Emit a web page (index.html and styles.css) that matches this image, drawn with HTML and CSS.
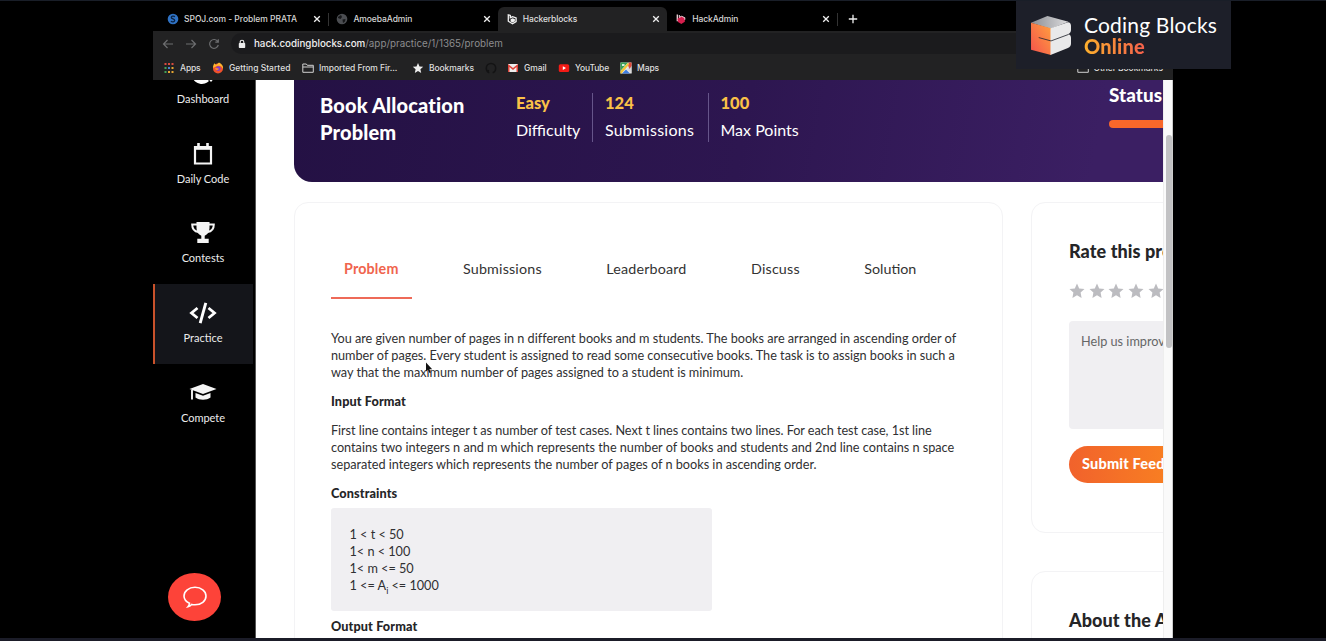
FILE: index.html
```html
<!DOCTYPE html>
<html lang="en">
<head>
<meta charset="utf-8">
<title>Hackerblocks</title>
<link rel="stylesheet" href="styles.css">
</head>
<body>
<div class="screen">
  <div class="browser">
    <div class="tabstrip">
      <div class="tab">
        <svg class="fav" viewBox="0 0 12 12"><circle cx="6" cy="6" r="5.3" fill="#2f72c4"/><path d="M8 3.600C6.500 2.700 4.200 3 4.300 4.600 4.400 6.200 7.800 5.700 7.700 7.400 7.600 9 5.200 9.200 3.900 8.200" fill="none" stroke="#0b2342" stroke-width="1.300"/></svg>
        <span class="t-spoj">SPOJ.com - Problem PRATA</span>
        <svg class="close" viewBox="0 0 8 8"><path d="M1.200 1.200l5.600 5.600M6.800 1.200L1.200 6.800"/></svg>
      </div>
      <div class="tab sep">
        <svg class="fav" viewBox="0 0 12 12"><circle cx="6" cy="6" r="5.300" fill="#4b4d51"/><path d="M2 4l3-2 1 2-1.500 2L2 5zM6.500 6.500L9.500 6 9 8.500 7 10z" fill="#17181a"/></svg>
        <span class="t-amoeba">AmoebaAdmin</span>
        <svg class="close" viewBox="0 0 8 8"><path d="M1.200 1.200l5.600 5.600M6.800 1.200L1.200 6.800"/></svg>
      </div>
      <div class="tab active">
        <svg class="fav" viewBox="0 0 12 12"><path d="M2.300 1.800v6.400l4.200 2.500 3.600-2.100V5L6.600 3.600 4.300 4.700V2.500z" fill="none" stroke="#f2f2f2" stroke-width="1.300"/><path d="M4.600 6.300l2-1 2.300 1v2L6.600 9.600l-2-1.200z" fill="#f2f2f2"/></svg>
        <span class="t-hb">Hackerblocks</span>
        <svg class="close" viewBox="0 0 8 8"><path d="M1.200 1.200l5.600 5.600M6.800 1.200L1.200 6.800"/></svg>
      </div>
      <div class="tab">
        <svg class="fav" viewBox="0 0 12 12"><path d="M2.300 1.500v6.700" stroke="#f3d5dc" stroke-width="1.300"/><path d="M2.500 6l1.800-2L6.500 3.300 9.800 4.700v4L6.300 10.900 3 9z" fill="#d51f4d"/><path d="M4.300 2v2.400l2.200-1.100 3.300 1.400v2" fill="none" stroke="#f3d5dc"/></svg>
        <span class="t-ha">HackAdmin</span>
        <svg class="close" viewBox="0 0 8 8"><path d="M1.200 1.200l5.600 5.600M6.800 1.200L1.200 6.800"/></svg>
      </div>
      <div class="newtab sep"><svg class="plus" viewBox="0 0 10 10"><path d="M5 .8v8.400M.8 5h8.400"/></svg></div>
    </div>
    <div class="toolbar">
      <svg class="nav" viewBox="0 0 12 12"><path d="M11 6H1.500M5.500 2l-4 4 4 4"/></svg>
      <svg class="nav" viewBox="0 0 12 12"><path d="M1 6h9.500M6.500 2l4 4-4 4"/></svg>
      <svg class="nav" viewBox="0 0 12 12"><path d="M9.800 3.600A4.400 4.400 0 1 0 10.300 7M10.300 1.200v3H7.300"/></svg>
      <div class="omnibox">
        <svg class="lock" viewBox="0 0 8 10"><path d="M2.200 4.500V3a1.800 1.800 0 0 1 3.600 0v1.500" fill="none" stroke="#ededed" stroke-width="1.100"/><rect x=".8" y="4" width="6.400" height="5" rx=".7" fill="#ededed"/></svg>
        <span class="url"><span class="host">hack.codingblocks.com</span><span class="path">/app/practice/1/1365/problem</span></span>
      </div>
    </div>
    <div class="bookmarks">
      <div class="bm b1"><svg class="bmi" viewBox="0 0 12 12"><g fill="#d94b3f"><path d="M1.500 1h2v2h-2zM5 1h2v2H5zM8.500 1h2v2h-2z"/></g><path d="M1.500 5h2v2h-2zM1.500 9h2v2h-2z" fill="#43a25a"/><path d="M5 5h2v2H5z" fill="#4a7fd0"/><path d="M8.500 5h2v2h-2zM5 9h2v2H5zM8.500 9h2v2h-2z" fill="#e6a531"/></svg><span class="k-apps">Apps</span></div>
      <div class="bm b2"><svg class="bmi" viewBox="0 0 12 12"><circle cx="6" cy="6.500" r="5" fill="#f0512c"/><path d="M1 6C1 3 2 2 2.500 1.200L4 3 7 .5C10 2 11.500 4 11 7 10 4 7 3 5 4z" fill="#ffb52e"/><circle cx="6.300" cy="6.600" r="2.300" fill="#7b3fd0"/><path d="M3 6.500c1.500-1 2.500 0 4 .3C6 8.500 4 8.500 3 6.500z" fill="#ff8b2c"/></svg><span>Getting Started</span></div>
      <div class="bm b3"><svg class="bmi" viewBox="0 0 12 12"><path d="M.8 10.300V2h3.500l1 1.300h6v7zM.8 5h10.500" fill="none" stroke="#d0d0d0"/></svg><span class="k-imp">Imported From Fir...</span></div>
      <div class="bm b4"><svg class="bmi" viewBox="0 0 12 12"><path d="M6 1l1.500 3.400 3.700.4-2.800 2.500.8 3.700L6 9.100 2.800 11l.8-3.700L.8 4.800l3.700-.4z" fill="#eee"/></svg><span class="k-bm">Bookmarks</span></div>
      <div class="bm b5"><svg class="bmi" viewBox="0 0 12 12"><path d="M4.300 10.700C2.300 10 1.300 8.300 1.300 6.200a4.700 4.700 0 0 1 9.400 0c0 2.100-1 3.800-3 4.500M4 9.200c-.6-.3-1-.7-1.200-1.200" fill="none" stroke="#131314" stroke-width="1.500"/></svg></div>
      <div class="bm b6"><svg class="bmi" viewBox="0 0 12 12"><path d="M1 2h10v8H1z" fill="#eee"/><path d="M1 10V2l5 4 5-4v8H9.500V5L6 8 2.500 5v5z" fill="#dd4238"/></svg><span class="k-gm">Gmail</span></div>
      <div class="bm b7"><svg class="bmi" viewBox="0 0 12 12"><rect x=".8" y="2.200" width="10.400" height="7.800" rx="1.600" fill="#f31b16"/><path d="M4.800 4.300v3.600L8 6.100z" fill="#fff"/></svg><span class="k-yt">YouTube</span></div>
      <div class="bm b8"><svg class="bmi" viewBox="0 0 12 12"><path d="M.5.500h11v11H.5z" fill="#e9e9e9"/><path d="M.5.500H8L.5 9z" fill="#3aa158"/><path d="M2 11.500l4-4 4 4z" fill="#3e7de0"/><path d="M7 7l4.500 4.500V4z" fill="#d8d8d8"/><path d="M9 .5h2.500V4L9.500 7 7.800 3z" fill="#e14a3c"/><path d="M.5 9L8 .8l1 2-7.500 8.700h-1z" fill="#f3c637"/><path d="M2 2h2.500v2H2z" fill="#d9efe0"/></svg><span class="k-mp">Maps</span></div>
      <div class="bm other"><svg class="bmi" viewBox="0 0 12 12"><path d="M.8 10.300V2h3.500l1 1.300h6v7z" fill="none" stroke="#d0d0d0"/></svg><span class="k-ot">Other Bookmarks</span></div>
    </div>
    <div class="page">
      <nav class="sidebar">
        <div class="item"><svg class="ico" viewBox="0 0 28 28"><path d="M13 4a10 10 0 1 0 7 17L13 14z" fill="#fff"/><path d="M16 15h9c0 3-1 5-3 7z" fill="#fff"/></svg><span>Dashboard</span></div>
        <div class="item"><svg class="ico" viewBox="0 0 28 28"><path d="M6 7h16v16.500H6z" fill="none" stroke="#f4f4f4" stroke-width="2.200"/><path d="M5 6h18v3.800H5z" fill="#f4f4f4"/><path d="M9.500 3v5M18.500 3v5" stroke="#f4f4f4" stroke-width="2.600"/></svg><span>Daily Code</span></div>
        <div class="item"><svg class="ico" viewBox="0 0 28 28"><path d="M7.500 3h13v6c0 4-2 6.500-4.800 7.800v2.900h4v4.300H8.300v-4.300h4v-2.900C9.500 15.500 7.500 13 7.500 9z" fill="#f4f4f4"/><path d="M8 5.500H3.200c0 4.500 2 7 6.300 7.500M20 5.500h4.800c0 4.500-2 7-6.300 7.500" fill="none" stroke="#f4f4f4" stroke-width="2"/></svg><span>Contests</span></div>
        <div class="item current"><svg class="ico" viewBox="0 0 28 28"><path d="M8.500 9l-6 5 6 5M19.500 9l6 5-6 5" fill="none" stroke="#fff" stroke-width="2.800"/><path d="M16.800 3.800l-5.600 20.400" stroke="#fff" stroke-width="2.900"/></svg><span>Practice</span></div>
        <div class="item"><svg class="ico" viewBox="0 0 28 28"><path d="M14 5l13.500 5L14 15 .5 10z" fill="#f4f4f4"/><path d="M6.500 14l7.500 2.800 7.500-2.800v4.500c-4 3-11 3-15 0z" fill="#f4f4f4"/><path d="M3 11v9.500" stroke="#f4f4f4" stroke-width="1.900"/></svg><span>Compete</span></div>
        <div class="chat"><svg viewBox="0 0 26 24"><path d="M7.500 18.300C3.800 16.500 2 14 2 11 2 6 6.800 2.300 13 2.300S24 6 24 11s-4.800 8.800-11 8.800c-1.200 0-2.300-.1-3.300-.4-.8 1.200-2 2-3.700 2.300.9-1 1.400-2.100 1.500-3.400z"/></svg></div>
      </nav>
      <main class="content">
        <section class="hero">
          <h1>Book Allocation<br>Problem</h1>
          <div class="stats">
            <div class="stat"><b>Easy</b><span>Difficulty</span></div>
            <div class="stat"><b>124</b><span class="subs">Submissions</span></div>
            <div class="stat"><b>100</b><span>Max Points</span></div>
          </div>
          <div class="status"><b>Status</b><i class="bar"></i></div>
        </section>
        <div class="cols">
          <section class="card problem">
            <div class="ptabs">
              <div class="ptab on">Problem</div>
              <div class="ptab">Submissions</div>
              <div class="ptab">Leaderboard</div>
              <div class="ptab">Discuss</div>
              <div class="ptab last">Solution</div>
            </div>
            <p>You are given number of pages in n different books and m students. The books are arranged in ascending order of<br>number of pages. Every student is assigned to read some consecutive books. The task is to assign books in such a<br>way that the maximum number of pages assigned to a student is minimum.</p>
            <h2>Input Format</h2>
            <p><span class="tight">First line contains integer t as number of test cases. Next t lines contains two lines. For each test case, 1st line</span><br>contains two integers n and m which represents the number of books and students and 2nd line contains n space<br>separated integers which represents the number of pages of n books in ascending order.</p>
            <h2>Constraints</h2>
            <div class="code">1 &lt; t &lt; 50<br>1&lt; n &lt; 100<br>1&lt; m &lt;= 50<br>1 &lt;= A<sub>i</sub> &lt;= 1000</div>
            <h2>Output Format</h2>
          </section>
          <aside class="side">
            <section class="card rate">
              <h3>Rate this problem</h3>
              <div class="stars">
                <svg viewBox="0 0 16 16"><path d="M8 .5l2.200 4.900 5.300.6-3.900 3.600 1 5.400L8 12.300 3.400 15l1-5.400L.5 6l5.300-.6z"/></svg>
                <svg viewBox="0 0 16 16"><path d="M8 .5l2.200 4.900 5.300.6-3.900 3.600 1 5.400L8 12.300 3.400 15l1-5.400L.5 6l5.300-.6z"/></svg>
                <svg viewBox="0 0 16 16"><path d="M8 .5l2.200 4.900 5.300.6-3.900 3.600 1 5.400L8 12.300 3.400 15l1-5.400L.5 6l5.300-.6z"/></svg>
                <svg viewBox="0 0 16 16"><path d="M8 .5l2.200 4.900 5.300.6-3.900 3.600 1 5.400L8 12.300 3.400 15l1-5.400L.5 6l5.300-.6z"/></svg>
                <svg viewBox="0 0 16 16"><path d="M8 .5l2.200 4.900 5.300.6-3.900 3.600 1 5.400L8 12.300 3.400 15l1-5.400L.5 6l5.300-.6z"/></svg>
              </div>
              <div class="feedback">Help us improve</div>
              <div class="submit">Submit Feedback</div>
            </section>
            <section class="card about"><h3>About the Author</h3></section>
          </aside>
        </div>
      </main>
      <div class="scroll"><i class="thumb"></i></div>
    </div>
  </div>
  <div class="brand">
    <svg class="cube" viewBox="0 0 40 40"><defs><linearGradient id="o" x1="1" y1="0" x2="0" y2="1"><stop offset="0" stop-color="#ffa23f"/><stop offset="1" stop-color="#f4514c"/></linearGradient><linearGradient id="g" x1="0" y1="0" x2="1" y2="0"><stop offset="0" stop-color="#8b8d93"/><stop offset="1" stop-color="#dcdcde"/></linearGradient></defs><path d="M1 7.500L17 1l20.500 5.500L20 13.500z" fill="url(#g)"/><path d="M1 7.500L20.500 13v26L1 34z" fill="url(#o)"/><path d="M20 13l17-6c2 0 3 1.500 3 3.500v4c0 2-1 3.500-3 4.300 2 0 3 1.500 3 3.500v5.500c0 2-1 3.500-3 4.300L20 39z" fill="#e9e9ea"/><path d="M8.500 22l12 3.300L37.500 19" fill="none" stroke="#20222b" stroke-width=".8"/></svg>
    <div class="words">Coding Blocks<br><b>Online</b></div>
  </div>
  <svg class="cursor" viewBox="0 0 8 12"><path d="M1 .5v9l2-1.800L4.500 11l1.300-.6-1.400-3.100h2.800z"/></svg>
</div>
</body>
</html>
```
FILE: styles.css
```css
*{box-sizing:border-box}
body{margin:0;background:#000;overflow:hidden;font-family:Lato,"Open Sans",sans-serif}
.screen{position:relative;width:1326px;height:641px;overflow:hidden;background:#000;border-top:1px solid #191e28;border-bottom:3px solid #1b1c28}
.browser{width:1020px;height:637px;margin-left:153px;display:flex;flex-direction:column}
svg{display:block;flex:none}
.tabstrip,.toolbar,.bookmarks{font-family:Inter,sans-serif;white-space:nowrap;flex:none}
.tabstrip{height:30px;padding:6px 0 0 6px;display:flex;background:#000;font-size:8.500px}
.tab{width:169.400px;height:24px;padding:0 7px 1px 8px;display:flex;align-items:center;color:#d6d6d6;font-weight:500}
.tab.active{background:#222223;border-radius:6px 6px 0 0;color:#dedede}
.t-spoj{letter-spacing:-.03px}
.t-amoeba{letter-spacing:-.08px}
.t-hb{letter-spacing:-.12px}
.t-ha{letter-spacing:-.08px}
.fav{width:12px;height:12px;margin-right:5px}
.close{width:8px;height:8px;margin-left:auto}
.close path,.plus path{stroke:#f0f0f0;stroke-width:1.300;fill:none}
.sep{background:linear-gradient(#333,#333) 0 50%/1px 13px no-repeat}
.newtab{padding:7px 0 0 11px}
.plus{width:10px;height:10px}
.toolbar{height:26px;background:#222223;display:flex;align-items:center;padding:0 0 1px 9px;gap:11px}
.nav{width:12px;height:12px;fill:none;stroke:#6d6e70;stroke-width:1.200}
.omnibox{flex:1;height:21px;border-radius:11px 0 0 11px;background:#1b1b1d;display:flex;align-items:center;padding-left:7px}
.lock{width:8px;height:10px;margin-right:8px}
.url{font-size:9.800px;color:#8d8d8f}
.host{font-weight:500;color:#efefef;letter-spacing:-.02px}
.path{letter-spacing:.02px}
.bookmarks{height:23px;background:#222223;display:flex;padding-left:10px;font-size:8.500px;font-weight:500;color:#dedede}
.bm{display:flex;align-items:center;height:21px}
.bmi{width:12px;height:12px;margin-right:5px}
.b1{width:49px}.b2{width:90px}.b3{width:110px}.b4{width:73px}.b5{width:22px}.b6{width:51px}.b7{width:62px}.b8{width:60px}
.k-apps{letter-spacing:-.15px}
.k-imp{letter-spacing:-.06px}
.k-bm,.k-gm,.k-mp,.k-ot{letter-spacing:-.09px}
.k-yt{letter-spacing:-.19px}
.other{margin-left:auto;padding-right:10px}
.page{flex:1;min-height:0;display:flex;background:#fff;overflow:hidden}
.sidebar{width:103px;flex:none;background:#000;border-right:1px solid #555;position:relative;overflow:hidden;color:#ececec;font-size:11px}
.item{height:79.700px;padding:15px 2px 0 0;display:flex;flex-direction:column;align-items:center;line-height:14px;gap:4px;white-space:nowrap}
.item:first-child{margin-top:-35px}
.item.current{background:#14151a;border-left:2px solid #c9522b;margin-right:2px}
.ico{width:28px;height:28px}
.chat{position:absolute;left:15px;top:493px;width:53px;height:48px;border-radius:50%;background:#fd4339;display:flex;align-items:center;justify-content:center}
.chat svg{width:26px;height:24px;fill:none;stroke:#fff;stroke-width:1.600}
.content{width:907px;flex:none;overflow:hidden;padding-left:38px}
.hero{width:1000px;height:102px;border-radius:0 0 0 18px;background:linear-gradient(100deg,#241144,#2d1650 45%,#3b1f63 80%);color:#fff;display:flex;padding-left:26px;white-space:nowrap}
.hero h1{width:196px;margin:0;padding-top:12px;font-size:20px;line-height:27px;font-weight:900;letter-spacing:.14px}
.stats{display:flex;height:49px;margin-top:13px;width:593px}
.stat{display:flex;flex-direction:column;align-items:flex-start;padding:0 12px;border-left:1px solid #66558a;line-height:32px;font-size:16px;width:115.500px}
.stat:first-child{padding-left:0;border:0;width:76px}
.stat b{color:#fbc147;height:22px;font-size:16.500px;font-weight:900;line-height:21px}
.subs{letter-spacing:.3px}
.status{display:flex;flex-direction:column;font-size:18.800px;line-height:24px;padding-top:3px;letter-spacing:.1px}
.status b{font-weight:900}
.bar{width:100px;height:8px;border-radius:4px;background:#f8672a;margin-top:13px}
.cols{display:flex;gap:28px;padding-top:20px;width:1200px}
.card{border:1px solid #f3f3f5;border-radius:14px;background:#fff;flex:none}
.problem{width:709px;height:500px;padding:53px 36px 0;color:#303032;font-size:12.700px;line-height:16.800px;letter-spacing:-.018px;white-space:nowrap}
.ptabs{display:flex;gap:37.500px;height:43px;font-size:14.300px;line-height:26px;margin-bottom:31px;color:#333;letter-spacing:.17px}
.ptab{height:43px;padding:0 13.500px}
.ptab.on{width:81px;padding:0 13px;color:#f0644d;font-weight:700;border-bottom:2px solid #ee6a58}
.ptab.last{letter-spacing:0}
.problem p{margin:0 0 12.500px}
.tight{letter-spacing:-.05px}
.problem h2{margin:0 0 12.500px;font-size:12.700px;line-height:16.800px;font-weight:900;letter-spacing:.1px;color:#252527}
.code{width:381px;height:103px;margin:-6px 0 7px;padding:18px 18.500px;background:#f0eff2;border-radius:3px}
sub{font-size:9px;line-height:0;vertical-align:-4px}
.side{display:flex;flex-direction:column;gap:38px}
.rate{width:350px;height:331px;padding:36px 37px 0}
.side h3{margin:0;font-size:18px;line-height:24px;color:#252527;font-weight:900;letter-spacing:.08px;white-space:nowrap}
.stars{display:flex;gap:3.700px;padding:20px 0 22px}
.stars svg{width:16px;height:16px;fill:#bcbcc0}
.feedback{height:108px;background:#f0eff2;border-radius:4px;padding:12px;font-size:12.700px;line-height:16px;color:#666}
.submit{height:37px;margin-top:17px;border-radius:19px;background:linear-gradient(90deg,#f1622c,#fb8a1e 50%);color:#fff;font-weight:900;font-size:14.500px;letter-spacing:.19px;line-height:36px;padding-left:13px}
.about{width:350px;height:150px;padding:36px 37px 0}
.scroll{width:10px;background:#fafafa;border-left:1px solid #eee;border-right:1px solid #ccc;padding:55px 0 0 2px}
.thumb{display:block;width:6px;height:213px;background:#c2c2c4;border-radius:3px}
.brand{position:absolute;left:1016px;top:0;width:215px;height:68px;background:#1d1f29;display:flex;padding:14px 0 0 14px;color:#fff}
.cube{width:41px;height:41px}
.words{font-size:21px;line-height:21px;letter-spacing:.19px;margin:-1px 0 0 13px;white-space:nowrap}
.words b{font-size:20px;background:linear-gradient(90deg,#fdb02c,#f4604c);-webkit-background-clip:text;background-clip:text;color:transparent;font-weight:900}
.cursor{position:absolute;left:425px;top:361px;width:8px;height:12px;fill:#111}
```
